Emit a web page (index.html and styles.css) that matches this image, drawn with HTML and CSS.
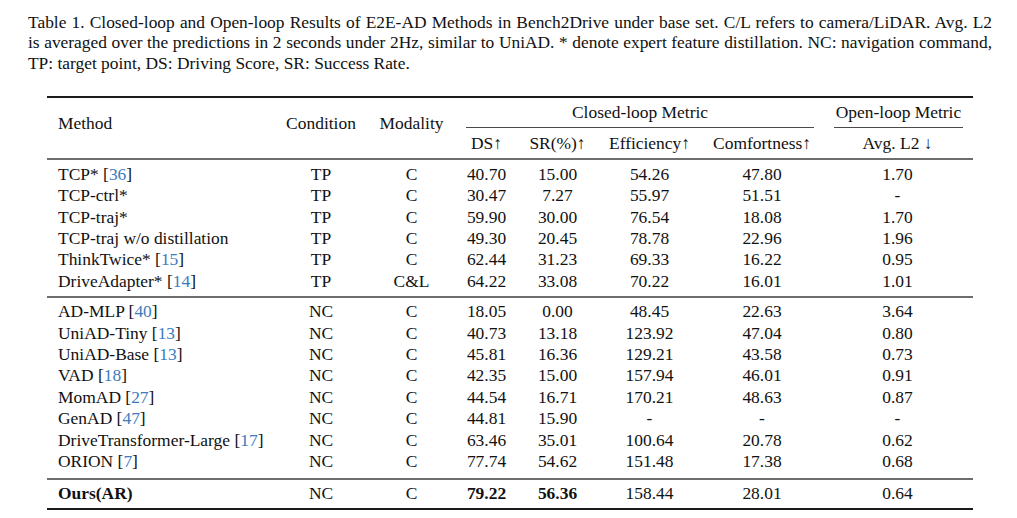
FILE: index.html
```html
<!DOCTYPE html>
<html lang="en">
<head>
<meta charset="utf-8">
<title>Table 1</title>
<link rel="stylesheet" href="styles.css">
</head>
<body>
<div class="page">
  <p class="caption"><span class="cap-line">Table 1. Closed-loop and Open-loop Results of E2E-AD Methods in Bench2Drive under base set. C/L refers to camera/LiDAR. Avg. L2</span><span class="cap-line">is averaged over the predictions in 2 seconds under 2Hz, similar to UniAD. * denote expert feature distillation. NC: navigation command,</span><span class="cap-line cap-last">TP: target point, DS: Driving Score, SR: Success Rate.</span></p>

  <div class="results">
    <div class="rule rule-top"></div>

    <div class="hd hd-span hd-method">Method</div>
    <div class="hd hd-span">Condition</div>
    <div class="hd hd-span">Modality</div>
    <div class="hd hd-group hd-closed"><div class="group-label">Closed-loop Metric</div></div>
    <div class="hd hd-group hd-open"><div class="group-label">Open-loop Metric</div></div>

    <div class="hd hd-sub">DS↑</div>
    <div class="hd hd-sub">SR(%)↑</div>
    <div class="hd hd-sub">Efficiency↑</div>
    <div class="hd hd-sub">Comfortness↑</div>
    <div class="hd hd-sub">Avg. L2 ↓</div>

    <div class="rule rule-mid rule-after-head"></div>

    <div class="c m">TCP* [<span class="cite">36</span>]</div><div class="c">TP</div><div class="c">C</div><div class="c">40.70</div><div class="c">15.00</div><div class="c">54.26</div><div class="c">47.80</div><div class="c">1.70</div>
    <div class="c m">TCP-ctrl*</div><div class="c">TP</div><div class="c">C</div><div class="c">30.47</div><div class="c">7.27</div><div class="c">55.97</div><div class="c">51.51</div><div class="c">-</div>
    <div class="c m">TCP-traj*</div><div class="c">TP</div><div class="c">C</div><div class="c">59.90</div><div class="c">30.00</div><div class="c">76.54</div><div class="c">18.08</div><div class="c">1.70</div>
    <div class="c m">TCP-traj w/o distillation</div><div class="c">TP</div><div class="c">C</div><div class="c">49.30</div><div class="c">20.45</div><div class="c">78.78</div><div class="c">22.96</div><div class="c">1.96</div>
    <div class="c m">ThinkTwice* [<span class="cite">15</span>]</div><div class="c">TP</div><div class="c">C</div><div class="c">62.44</div><div class="c">31.23</div><div class="c">69.33</div><div class="c">16.22</div><div class="c">0.95</div>
    <div class="c m">DriveAdapter* [<span class="cite">14</span>]</div><div class="c">TP</div><div class="c">C&amp;L</div><div class="c">64.22</div><div class="c">33.08</div><div class="c">70.22</div><div class="c">16.01</div><div class="c">1.01</div>

    <div class="rule rule-mid rule-block2"></div>

    <div class="c m">AD-MLP [<span class="cite">40</span>]</div><div class="c">NC</div><div class="c">C</div><div class="c">18.05</div><div class="c">0.00</div><div class="c">48.45</div><div class="c">22.63</div><div class="c">3.64</div>
    <div class="c m">UniAD-Tiny [<span class="cite">13</span>]</div><div class="c">NC</div><div class="c">C</div><div class="c">40.73</div><div class="c">13.18</div><div class="c">123.92</div><div class="c">47.04</div><div class="c">0.80</div>
    <div class="c m">UniAD-Base [<span class="cite">13</span>]</div><div class="c">NC</div><div class="c">C</div><div class="c">45.81</div><div class="c">16.36</div><div class="c">129.21</div><div class="c">43.58</div><div class="c">0.73</div>
    <div class="c m">VAD [<span class="cite">18</span>]</div><div class="c">NC</div><div class="c">C</div><div class="c">42.35</div><div class="c">15.00</div><div class="c">157.94</div><div class="c">46.01</div><div class="c">0.91</div>
    <div class="c m">MomAD [<span class="cite">27</span>]</div><div class="c">NC</div><div class="c">C</div><div class="c">44.54</div><div class="c">16.71</div><div class="c">170.21</div><div class="c">48.63</div><div class="c">0.87</div>
    <div class="c m">GenAD [<span class="cite">47</span>]</div><div class="c">NC</div><div class="c">C</div><div class="c">44.81</div><div class="c">15.90</div><div class="c">-</div><div class="c">-</div><div class="c">-</div>
    <div class="c m">DriveTransformer-Large [<span class="cite">17</span>]</div><div class="c">NC</div><div class="c">C</div><div class="c">63.46</div><div class="c">35.01</div><div class="c">100.64</div><div class="c">20.78</div><div class="c">0.62</div>
    <div class="c m">ORION [<span class="cite">7</span>]</div><div class="c">NC</div><div class="c">C</div><div class="c">77.74</div><div class="c">54.62</div><div class="c">151.48</div><div class="c">17.38</div><div class="c">0.68</div>

    <div class="rule rule-mid rule-block3"></div>

    <div class="c m b">Ours(AR)</div><div class="c">NC</div><div class="c">C</div><div class="c b">79.22</div><div class="c b">56.36</div><div class="c">158.44</div><div class="c">28.01</div><div class="c">0.64</div>

    <div class="rule rule-bottom"></div>
  </div>
</div>
</body>
</html>
```

FILE: styles.css
```css
html, body {
  margin: 0;
  padding: 0;
  background: #ffffff;
}

body {
  font-family: "Liberation Serif", "Times New Roman", serif;
  color: #111111;
}

.page {
  width: 1017px;
  height: 518px;
  box-sizing: border-box;
  padding: 11.65px 25px 0 28px;
  overflow: hidden;
}

.caption {
  margin: 0;
  font-size: 17.4px;
  line-height: 20.5px;
}

.cap-line {
  display: block;
  text-align: justify;
  text-align-last: justify;
  white-space: nowrap;
}

.cap-line.cap-last {
  text-align: left;
  text-align-last: left;
}

.results {
  display: grid;
  grid-template-columns: 227px 94px 87px 63px 79px 105px 120px 151px;
  width: 926px;
  margin: 22.85px 0 0 19px;
  font-size: 17.45px;
  line-height: 21.35px;
}

.rule {
  grid-column: 1 / -1;
  height: 2px;
}

.rule-top {
  background: #1a1a1a;
}

.rule-bottom {
  background: #1a1a1a;
  margin-top: 4px;
}

.rule-mid {
  background: #6e6e6e;
}

.rule-after-head {
  margin-bottom: 4px;
}

.rule-block2 {
  margin-top: 3.9px;
  margin-bottom: 3.6px;
}

.rule-block3 {
  margin-top: 5.6px;
  margin-bottom: 3.3px;
}

.hd {
  font-weight: normal;
  text-align: center;
  white-space: nowrap;
}

.hd-span {
  grid-row: span 2;
  padding-top: 14.6px;
  align-self: start;
}

.hd-method {
  text-align: left;
  padding-left: 11px;
}

.hd-closed {
  grid-column: 4 / 8;
}

.hd-open {
  grid-column: 8 / 9;
}

.hd-group .group-label {
  padding: 3.6px 0 4px;
  border-bottom: 1px solid #4a4a4a;
}

.hd-closed .group-label {
  margin: 0 8px 0 11px;
}

.hd-open .group-label {
  margin: 0 10px 0 12px;
}

.hd-sub {
  padding: 5.35px 0 3.3px;
}

.c {
  text-align: center;
  white-space: nowrap;
}

.c.m {
  text-align: left;
  padding-left: 11px;
}

.b {
  font-weight: bold;
}

.cite {
  color: #3a7cbf;
}
```
